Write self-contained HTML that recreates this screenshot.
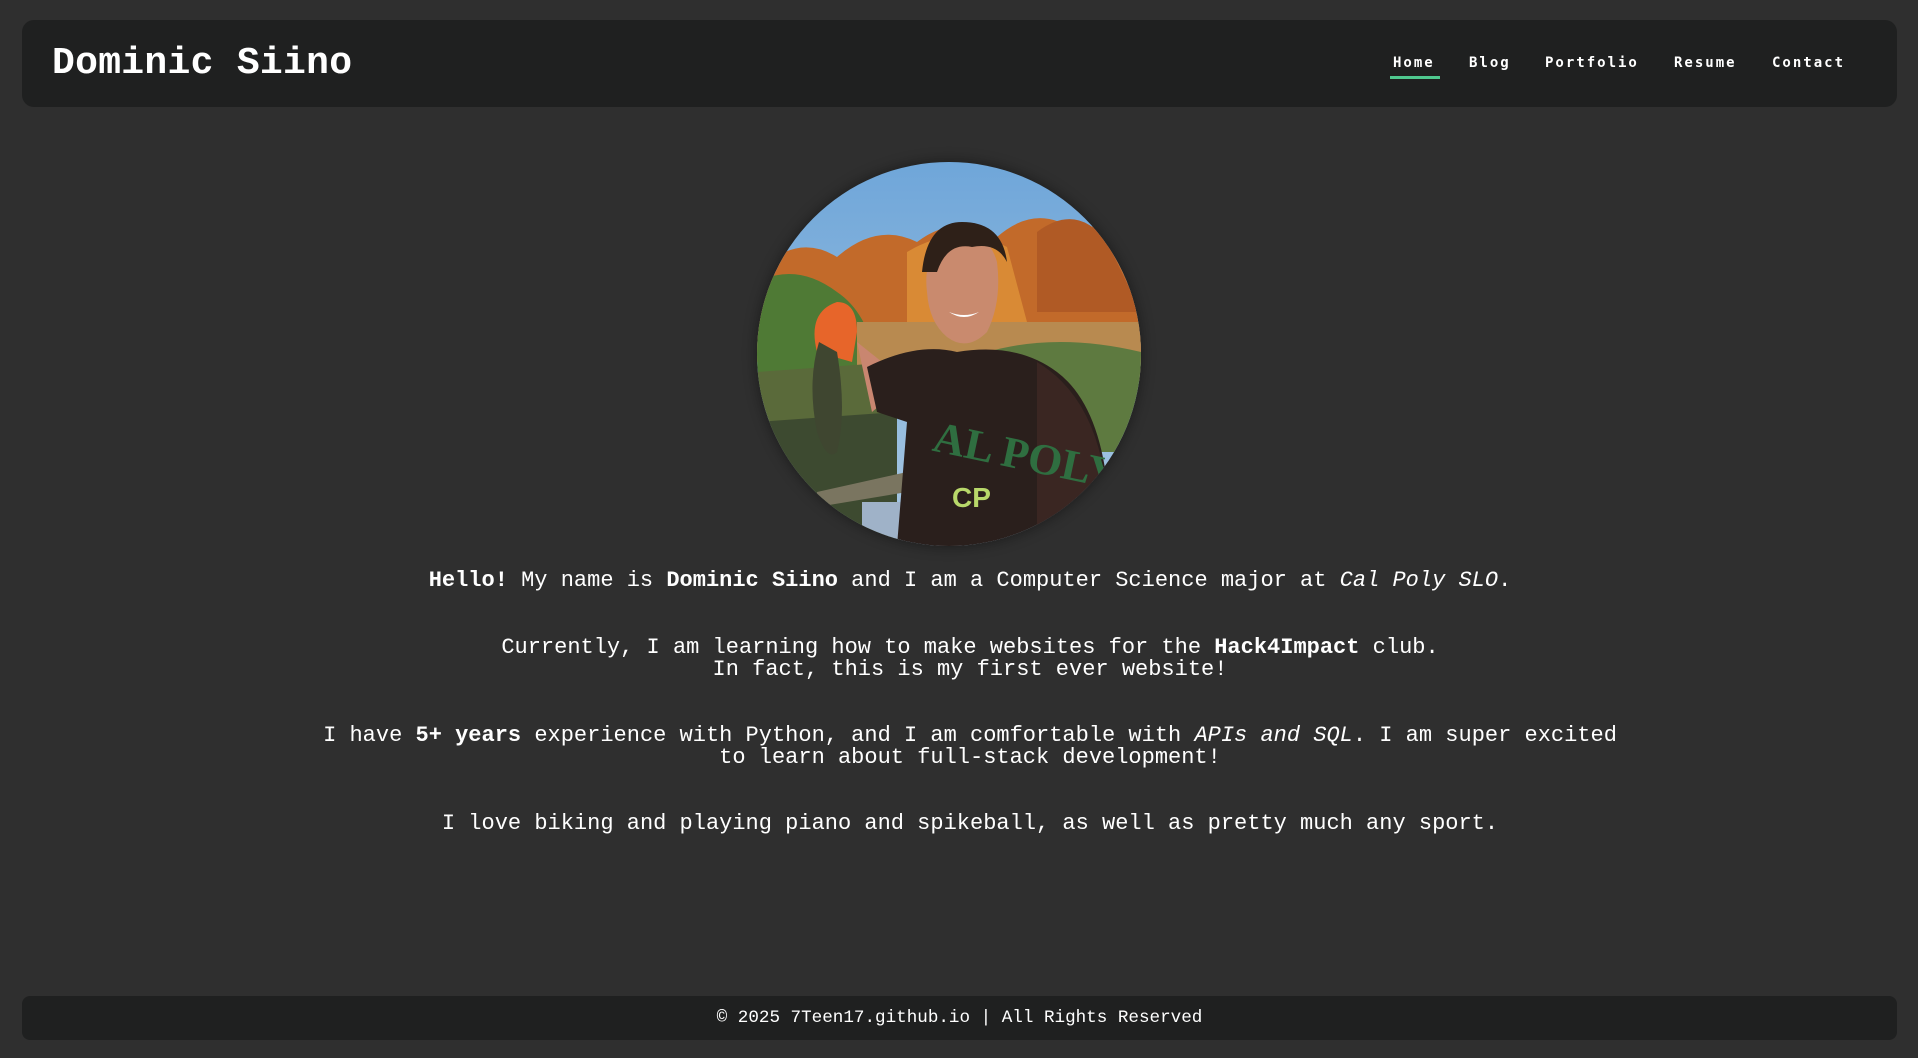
<!DOCTYPE html>
<html><head><meta charset="utf-8">
<style>
html,body{margin:0;padding:0;}
body{width:1918px;height:1058px;background:#2f2f2f;position:relative;overflow:hidden;font-family:"Liberation Mono","DejaVu Sans Mono",monospace;color:#fff;}
.hdr{position:absolute;left:22px;top:20px;width:1875px;height:87px;background:#1f2020;border-radius:12px;}
.title{position:absolute;left:52px;top:41px;font-size:38px;font-weight:bold;line-height:46px;letter-spacing:0.3px;}
.nav{position:absolute;top:53px;font-family:"DejaVu Sans Mono",monospace;font-weight:bold;font-size:14px;letter-spacing:2px;line-height:20px;}
.ul{position:absolute;left:1390px;top:76px;width:50px;height:2.5px;background:#4fc98f;}
.photo{position:absolute;left:757px;top:162px;width:384px;height:384px;border-radius:50%;overflow:hidden;box-shadow:0 0 14px rgba(0,0,0,.45);}
.txt{position:absolute;left:22px;right:0;text-align:center;font-size:22px;line-height:22px;white-space:pre;}
.ftr{position:absolute;left:22px;top:996px;width:1875px;height:44px;background:#1f2020;border-radius:8px;text-align:center;font-size:17.6px;line-height:44px;}
</style></head><body>
<div class="hdr"></div>
<div class="title">Dominic Siino</div>
<div class="nav" style="left:1393px">Home</div>
<div class="nav" style="left:1469px">Blog</div>
<div class="nav" style="left:1545px">Portfolio</div>
<div class="nav" style="left:1674px">Resume</div>
<div class="nav" style="left:1772px">Contact</div>
<div class="ul"></div>

<div class="photo">
<svg width="384" height="384" viewBox="0 0 384 384">
<defs>
<linearGradient id="sky" x1="0" y1="0" x2="0" y2="1"><stop offset="0" stop-color="#6fa6d9"/><stop offset="1" stop-color="#a9c8e2"/></linearGradient>
</defs>
<rect width="384" height="384" fill="url(#sky)"/>
<path d="M0 110 Q40 70 80 95 Q120 60 160 80 Q200 50 240 75 Q280 40 320 70 Q360 50 384 90 L384 200 L0 200Z" fill="#c26a2a"/>
<path d="M150 90 Q200 60 250 85 L270 160 L150 170Z" fill="#d98a35"/>
<path d="M280 70 Q320 40 350 80 L384 150 L280 150Z" fill="#b05a25"/>
<path d="M0 120 Q40 100 80 130 Q110 150 120 200 L0 240Z" fill="#4f7a35"/>
<rect x="100" y="160" width="284" height="60" fill="#b88a50"/>
<path d="M230 190 Q300 170 384 190 L384 290 L230 290Z" fill="#5e7a40"/>
<path d="M0 210 L140 200 L140 384 L0 384Z" fill="#5a6a3a"/>
<path d="M0 260 L140 250 L140 384 L0 384Z" fill="#3d4a30"/>
<path d="M60 330 L150 310 L150 330 L60 345Z" fill="#7a7560"/>
<rect x="105" y="340" width="40" height="44" fill="#9fb2c8"/>
<path d="M60 190 Q50 150 80 140 Q100 140 100 170 L95 200Z" fill="#e7652a"/>
<path d="M62 180 Q50 220 60 270 Q70 300 80 290 Q90 250 80 190Z" fill="#3f4630"/>
<path d="M100 180 L115 250 L150 220Z" fill="#c98670"/>
<path d="M110 205 Q160 180 200 190 Q260 180 300 210 Q340 240 350 320 L360 384 L140 384 L150 260 L120 250Z" fill="#2a1f1c"/>
<path d="M280 200 Q330 230 345 300 L340 384 L280 384Z" fill="#3a2622"/>
<path d="M170 130 Q165 90 195 75 Q230 65 240 100 Q245 140 230 170 Q210 190 190 175 Q172 160 170 130Z" fill="#c98a6e"/>
<path d="M165 110 Q170 60 205 60 Q245 60 250 100 Q240 80 215 85 Q190 80 180 110Z" fill="#2e2018"/>
<path d="M192 150 Q207 160 222 150 Q207 156 192 150Z" fill="#fff"/>
<text x="175" y="300" fill="#2f6e40" font-family="Liberation Serif" font-weight="bold" font-size="44" transform="rotate(12 230 290)">AL POLY</text>
<text x="195" y="345" fill="#b8d86a" font-family="Liberation Sans" font-weight="bold" font-size="28">CP</text>
</svg>
</div>

<div class="txt" style="top:570px"><b>Hello!</b> My name is <b>Dominic Siino</b> and I am a Computer Science major at <i>Cal Poly SLO</i>.</div>
<div class="txt" style="top:637px">Currently, I am learning how to make websites for the <b>Hack4Impact</b> club.</div>
<div class="txt" style="top:659px">In fact, this is my first ever website!</div>
<div class="txt" style="top:725px">I have <b>5+ years</b> experience with Python, and I am comfortable with <i>APIs and SQL</i>. I am super excited</div>
<div class="txt" style="top:747px">to learn about full-stack development!</div>
<div class="txt" style="top:813px">I love biking and playing piano and spikeball, as well as pretty much any sport.</div>

<div class="ftr">© 2025 7Teen17.github.io | All Rights Reserved</div>
</body></html>
